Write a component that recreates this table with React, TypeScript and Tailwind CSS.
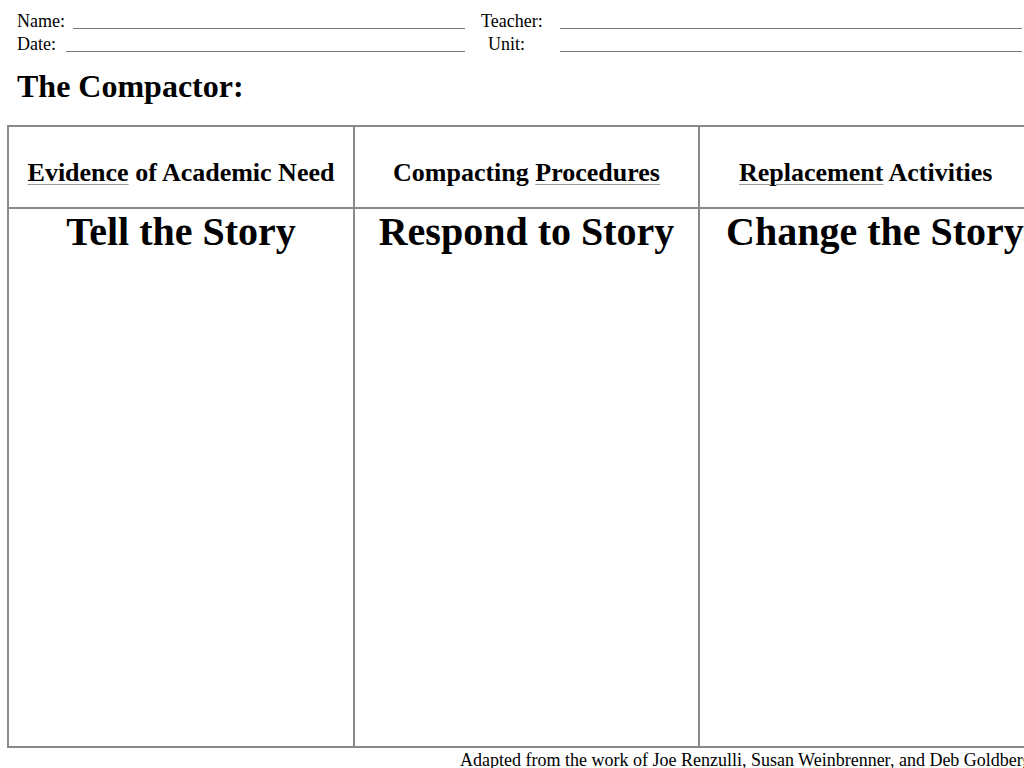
import React from "react";

const serif = { fontFamily: '"Liberation Serif", "DejaVu Serif", serif' };

export default function App() {
  return (
    <div className="w-[1024px] h-[768px] overflow-hidden bg-white text-black" style={serif}>
      <div className="pl-[17px] pt-[11px] flex">
        <div className="flex flex-col gap-[3px] w-[464px]">
          <div className="flex items-end">
            <span className="w-[56px] text-[18px] leading-[20px]">Name:</span>
            <span className="w-[392px] mb-[2px] border-b border-[#777]" />
          </div>
          <div className="flex items-end">
            <span className="w-[49px] text-[18px] leading-[20px]">Date:</span>
            <span className="w-[399px] mb-[2px] border-b border-[#777]" />
          </div>
        </div>
        <div className="flex flex-col gap-[3px]">
          <div className="flex items-end">
            <span className="w-[79px] text-[18px] leading-[20px]">Teacher:</span>
            <span className="w-[462px] mb-[2px] border-b border-[#777]" />
          </div>
          <div className="flex items-end">
            <span className="w-[79px] pl-[7px] text-[18px] leading-[20px]">Unit:</span>
            <span className="w-[462px] mb-[2px] border-b border-[#777]" />
          </div>
        </div>
      </div>
      <h1 className="pl-[17px] mt-[14px] text-[32px] leading-[36px] font-bold">The Compactor:</h1>
      <div className="ml-[7px] mt-[21px] w-[1060px] border-t-2 border-l-2 border-b-2 border-[#8a8a8a] grid grid-cols-[346px_345px_370px] grid-rows-[82px_537px]">
        <div className="flex items-center justify-center border-r-2 border-b-2 border-[#8a8a8a] pt-[10px] text-[26px] font-bold whitespace-nowrap">
          <span><span className="underline decoration-[#999] decoration-1 underline-offset-[3px]">Evidence</span> of Academic Need</span>
        </div>
        <div className="flex items-center justify-center border-r-2 border-b-2 border-[#8a8a8a] pt-[10px] text-[26px] font-bold whitespace-nowrap">
          <span>Compacting <span className="underline decoration-[#999] decoration-1 underline-offset-[3px]">Procedures</span></span>
        </div>
        <div className="flex items-center justify-start pl-[39px] border-b-2 border-[#8a8a8a] pt-[10px] text-[26px] font-bold whitespace-nowrap">
          <span><span className="underline decoration-[#999] decoration-1 underline-offset-[3px]">Replacement</span> Activities</span>
        </div>
        <div className="border-r-2 border-[#8a8a8a] text-center text-[40px] leading-[46px] font-bold whitespace-nowrap">Tell the Story</div>
        <div className="border-r-2 border-[#8a8a8a] text-center text-[40px] leading-[46px] font-bold whitespace-nowrap">Respond to Story</div>
        <div className="pl-[26px] text-[40px] leading-[46px] font-bold whitespace-nowrap">Change the Story</div>
      </div>
      <div className="pl-[460px] pt-[2px] text-[18px] leading-[20px] whitespace-nowrap">
        Adapted from the work of Joe Renzulli, Susan Weinbrenner, and Deb Goldberg
      </div>
    </div>
  );
}
